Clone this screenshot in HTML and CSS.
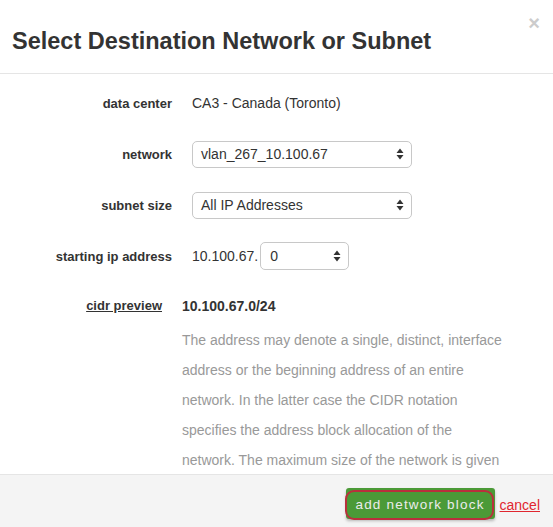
FILE: index.html
```html
<!DOCTYPE html>
<html>
<head>
<meta charset="utf-8">
<link rel="stylesheet" href="styles.css">
</head>
<body>
<div class="modal">
  <header class="modal-header">
    <h1 class="title">Select Destination Network or Subnet</h1>
    <span class="close">×</span>
  </header>
  <main class="modal-body">
    <div class="row">
      <div class="label">data center</div>
      <div class="value">CA3 - Canada (Toronto)</div>
    </div>
    <div class="row">
      <div class="label">network</div>
      <div class="value">
        <div class="select wide"><span>vlan_267_10.100.67</span><svg width="8" height="12" viewBox="0 0 8 12"><path d="M4 0.5 L7.5 5 H0.5 Z M4 11.5 L7.5 7 H0.5 Z" fill="#333"/></svg></div>
      </div>
    </div>
    <div class="row">
      <div class="label">subnet size</div>
      <div class="value">
        <div class="select wide"><span>All IP Addresses</span><svg width="8" height="12" viewBox="0 0 8 12"><path d="M4 0.5 L7.5 5 H0.5 Z M4 11.5 L7.5 7 H0.5 Z" fill="#333"/></svg></div>
      </div>
    </div>
    <div class="row">
      <div class="label">starting ip address</div>
      <div class="value ip">
        <span>10.100.67.</span>
        <div class="select small"><span>0</span><svg width="8" height="12" viewBox="0 0 8 12"><path d="M4 0.5 L7.5 5 H0.5 Z M4 11.5 L7.5 7 H0.5 Z" fill="#333"/></svg></div>
      </div>
    </div>
    <div class="cidr">
      <div class="label"><u>cidr preview</u></div>
      <div class="cidr-value">
        <div class="cidr-addr">10.100.67.0/24</div>
        <p class="desc">The address may denote a single, distinct, interface address or the beginning address of an entire network. In the latter case the CIDR notation specifies the address block allocation of the network. The maximum size of the network is given by the number of addresses that are possible with the remaining, least-significant bits below the prefix.</p>
      </div>
    </div>
  </main>
  <footer class="modal-footer">
    <button class="btn-add">add network block</button>
    <a class="cancel" href="#">cancel</a>
  </footer>
</div>
</body>
</html>
```

FILE: styles.css
```css
* { box-sizing: border-box; }
html, body { margin: 0; padding: 0; }
body {
  font-family: "Liberation Sans", Arial, sans-serif;
  color: #333;
  background: #fff;
  width: 553px;
  height: 527px;
  overflow: hidden;
}
.modal {
  display: flex;
  flex-direction: column;
  height: 527px;
}
.modal-header {
  height: 74px;
  border-bottom: 1px solid #e5e5e5;
  display: flex;
  align-items: flex-start;
  justify-content: space-between;
  padding: 0 13px 0 12px;
  flex: none;
}
.title {
  margin: 27px 0 0;
  font-size: 23.5px;
  font-weight: bold;
  line-height: 28px;
  color: #333;
}
.close {
  margin-top: 11px;
  font-size: 20px;
  line-height: 24px;
  color: #ccc;
  font-weight: bold;
}
.modal-body {
  flex: 1;
  overflow: hidden;
  padding: 15px 12px 0;
  display: flex;
  flex-direction: column;
  gap: 23px;
}
.modal-body > * { flex: none; }
.row {
  display: grid;
  grid-template-columns: 160px 1fr;
  column-gap: 20px;
  align-items: center;
  height: 28px;
}
.label {
  text-align: right;
  font-weight: bold;
  font-size: 13px;
  color: #333;
}
.value {
  font-size: 14px;
  display: flex;
  align-items: center;
}
.ip { gap: 2px; }
.select {
  display: flex;
  align-items: center;
  justify-content: space-between;
  border: 1px solid #c8c8c8;
  border-radius: 5px;
  height: 27px;
  padding: 0 7px 0 8px;
  font-size: 14px;
  background: #fff;
}
.select.wide { width: 220px; }
.select.small { width: 89px; height: 28px; padding-left: 9px; }
.cidr {
  display: grid;
  grid-template-columns: 150px 1fr;
  column-gap: 20px;
  margin-top: 3px;
}
.cidr .label { line-height: 20px; }
.cidr-addr {
  font-weight: bold;
  font-size: 14px;
  line-height: 20px;
}
.desc {
  margin: 9px 0 0;
  width: 326px;
  font-size: 14px;
  line-height: 30px;
  color: #999;
}
.modal-footer {
  flex: none;
  height: 53px;
  border-top: 1px solid #e5e5e5;
  background: #f4f4f4;
  display: flex;
  justify-content: flex-end;
  align-items: flex-start;
  padding: 13px 13px 0 0;
  gap: 5px;
}
.btn-add {
  position: relative;
  background: #4b9a37;
  color: #ececec;
  border: none;
  border-radius: 3px;
  height: 31px;
  width: 149px;
  font-family: "Liberation Sans", Arial, sans-serif;
  font-size: 13.5px;
  letter-spacing: 1.2px;
  padding: 2px 0 0;
  box-shadow: 0 2px 3px rgba(0,0,0,0.25);
}
.btn-add::after {
  content: "";
  position: absolute;
  top: 2px;
  left: -1px;
  right: 1px;
  bottom: -1px;
  border: 2.5px solid #b9303c;
  border-radius: 9px;
}
.cancel {
  color: #e0262f;
  font-size: 14px;
  margin-top: 9px;
}
```
